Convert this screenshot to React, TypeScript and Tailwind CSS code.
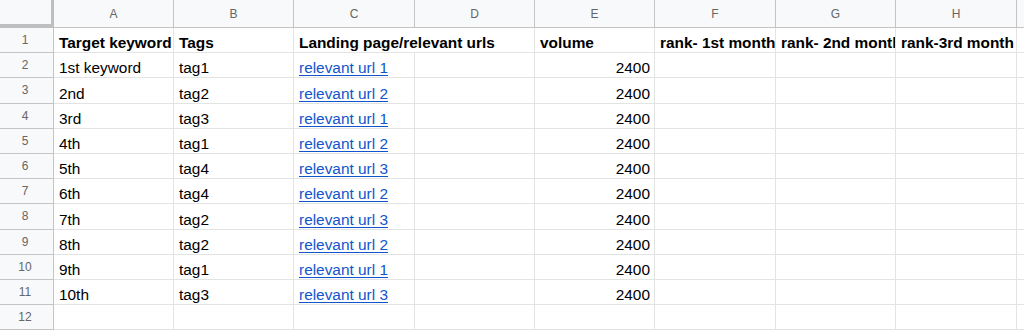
import React from "react";

type Row = {
  a: string;
  b: string;
  c: string;
  e: string;
};

const cols = ["A", "B", "C", "D", "E", "F", "G", "H", ""];

const rows: Row[] = [
  { a: "1st keyword", b: "tag1", c: "relevant url 1", e: "2400" },
  { a: "2nd", b: "tag2", c: "relevant url 2", e: "2400" },
  { a: "3rd", b: "tag3", c: "relevant url 1", e: "2400" },
  { a: "4th", b: "tag1", c: "relevant url 2", e: "2400" },
  { a: "5th", b: "tag4", c: "relevant url 3", e: "2400" },
  { a: "6th", b: "tag4", c: "relevant url 2", e: "2400" },
  { a: "7th", b: "tag2", c: "relevant url 3", e: "2400" },
  { a: "8th", b: "tag2", c: "relevant url 2", e: "2400" },
  { a: "9th", b: "tag1", c: "relevant url 1", e: "2400" },
  { a: "10th", b: "tag3", c: "relevant url 3", e: "2400" },
];

const cell =
  "relative flex items-end border-r border-b border-[#e2e3e3] bg-white px-[5px] leading-[18px] whitespace-nowrap text-[#000]";

function RowHead({ n }: { n: number }) {
  return (
    <div className="flex items-center justify-center border-r border-b border-[#c4c4c4] bg-[#f8f9fa] pr-[3px] text-[12px] text-[#666]">
      {n}
    </div>
  );
}

export default function App() {
  return (
    <div
      className="h-[333px] w-[1024px] overflow-hidden bg-white"
      style={{ fontFamily: '"Liberation Sans", Arial, sans-serif' }}
    >
      <div className="grid grid-cols-[54px_120px_120px_121px_120px_120px_121px_120px_121px_1fr] grid-rows-[28px_repeat(12,25.2px)] text-[15.4px]">
        {/* column headers */}
        <div className="border-r-[3px] border-b-4 border-[#bfbfbf] bg-[#f8f9fa]" />
        {cols.map((c, i) => (
          <div
            key={i}
            className="flex items-center justify-center border-r border-b border-[#c4c4c4] bg-[#f8f9fa] text-[12px] text-[#666]"
          >
            {c}
          </div>
        ))}

        {/* row 1: headings */}
        <RowHead n={1} />
        <div className={`${cell} font-bold overflow-hidden`}>Target keyword</div>
        <div className={`${cell} font-bold overflow-hidden`}>Tags</div>
        <div className={`${cell} z-10 border-r-0 font-bold`}>Landing page/relevant urls</div>
        <div className={cell} />
        <div className={`${cell} font-bold`}>volume</div>
        <div className={`${cell} font-bold overflow-hidden`}>rank- 1st month</div>
        <div className={`${cell} font-bold overflow-hidden`}>rank- 2nd month</div>
        <div className={`${cell} font-bold overflow-hidden`}>rank-3rd month</div>
        <div className={cell} />

        {rows.map((r, i) => (
          <React.Fragment key={i}>
            <RowHead n={i + 2} />
            <div className={cell}>{r.a}</div>
            <div className={cell}>{r.b}</div>
            <div className={cell}>
              <span className="text-[#1155cc] underline decoration-1 underline-offset-2">{r.c}</span>
            </div>
            <div className={cell} />
            <div className={`${cell} justify-end pr-[4px]`}>{r.e}</div>
            <div className={cell} />
            <div className={cell} />
            <div className={cell} />
            <div className={cell} />
          </React.Fragment>
        ))}

        <RowHead n={12} />
        {cols.map((_, i) => (
          <div key={i} className={cell} />
        ))}
      </div>
    </div>
  );
}
